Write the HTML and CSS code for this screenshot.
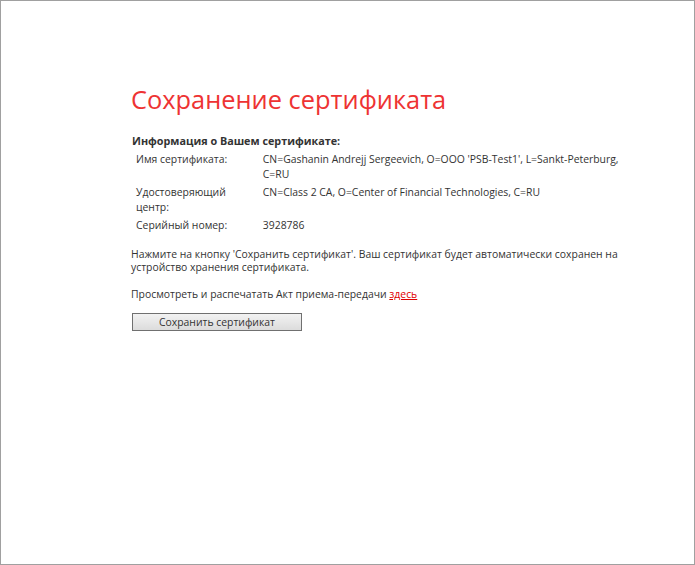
FILE: index.html
```html
<!DOCTYPE html>
<html lang="ru">
<head>
<meta charset="utf-8">
<title>Сохранение сертификата</title>
<link rel="stylesheet" href="styles.css">
</head>
<body>
<div class="frame">
  <main class="content">
    <h1 class="title">Сохранение сертификата</h1>
    <h2 class="subtitle">Информация о Вашем сертификате:</h2>
    <table class="info">
      <tr>
        <td class="label">Имя сертификата:</td>
        <td class="value">CN=Gashanin Andrejj Sergeevich, O=OOO 'PSB-Test1', L=Sankt-Peterburg, C=RU</td>
      </tr>
      <tr>
        <td class="label">Удостоверяющий центр:</td>
        <td class="value">CN=Class 2 CA, O=Center of Financial Technologies, C=RU</td>
      </tr>
      <tr>
        <td class="label">Серийный номер:</td>
        <td class="value">3928786</td>
      </tr>
    </table>
    <p class="text">Нажмите на кнопку 'Сохранить сертификат'. Ваш сертификат будет автоматически сохранен на устройство хранения сертификата.</p>
    <p class="text">Просмотреть и распечатать Акт приема-передачи <a class="link" href="#">здесь</a></p>
    <button class="btn" type="button">Сохранить сертификат</button>
  </main>
</div>
</body>
</html>
```
FILE: styles.css
```css
html, body {
  margin: 0;
  padding: 0;
  background: #fff;
}
.frame {
  box-sizing: border-box;
  width: 695px;
  height: 565px;
  border: 1px solid #a0a0a0;
  font-family: "Open Sans", "Noto Sans", sans-serif;
  font-size: 10.4px;
  color: #333;
}
.content {
  padding: 81px 0 0 130px;
  width: 500px;
}
.title {
  margin: 0;
  font-size: 25.4px;
  font-weight: normal;
  color: #ee3333;
  line-height: 34px;
}
.subtitle {
  margin: 18px 0 0 1px;
  font-size: 10.8px;
  font-weight: bold;
  line-height: 14px;
}
.info {
  border-collapse: collapse;
  margin: 2px 0 0 0;
}
.info td {
  vertical-align: top;
  padding: 2px 0;
  line-height: 14.5px;
}
.label {
  box-sizing: border-box;
  width: 132px;
  max-width: 132px;
  padding-left: 5px !important;
  padding-right: 30px !important;
}
.value {
  width: 375px;
}
.text {
  margin: 13px 0 0 0;
  line-height: 13.5px;
}
.link {
  color: #e00000;
  text-decoration: underline;
}
.btn {
  display: block;
  margin: 12px 0 0 1px;
  width: 170px;
  height: 18px;
  padding: 0;
  border: 1px solid #707070;
  border-radius: 0;
  background: linear-gradient(#f2f2f2, #dcdcdc);
  font-family: inherit;
  font-size: 10.4px;
  color: #333;
  line-height: 16px;
}
```
